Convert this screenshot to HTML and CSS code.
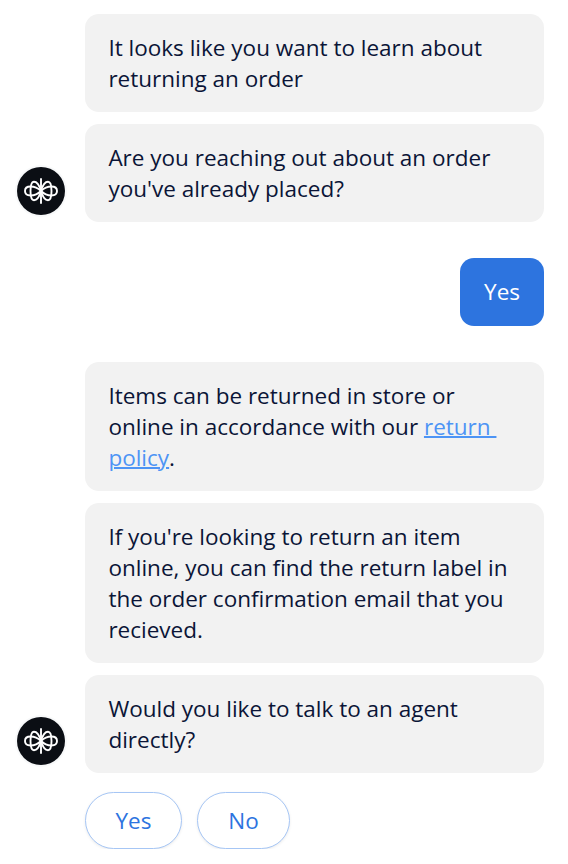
FILE: index.html
```html
<!DOCTYPE html>
<html lang="en">
<head>
<meta charset="UTF-8" />
<meta name="viewport" content="width=device-width, initial-scale=1" />
<title>Chat</title>
<link rel="stylesheet" href="styles.css">
</head>
<body>
  <!-- Shared bot logo -->
  <svg class="sprite" aria-hidden="true">
    <symbol id="logo" viewBox="0 0 48 48">
      <g fill="none" stroke="#fff" stroke-width="1.9" stroke-linecap="round">
        <path d="M24 12v24" />
        <path d="M24 24C20 20 16.500 19.500 13.500 19.500C9.500 19.500 8 21.500 8 24S9.500 28.500 13.500 28.500C16.500 28.500 20 28 24 24" />
        <path d="M24 24C28 20 31.500 19.500 34.500 19.500C38.500 19.500 40 21.500 40 24S38.500 28.500 34.500 28.500C31.500 28.500 28 28 24 24" />
        <path d="M24 24C22 17 19.500 14.800 17 14.800C14.500 14.800 13.500 19 13.500 24S14.500 33.200 17 33.200C19.500 33.200 22 31 24 24" />
        <path d="M24 24C26 17 28.500 14.800 31 14.800C33.500 14.800 34.500 19 34.500 24S33.500 33.200 31 33.200C28.500 33.200 26 31 24 24" />
      </g>
    </symbol>
  </svg>

  <main class="chat" aria-label="Conversation">
    <section class="message-group">
      <div class="avatar"><svg class="logo"><use href="#logo" /></svg></div>
      <div class="messages">
        <p class="bubble">It looks like you want to learn about returning an order</p>
        <p class="bubble">Are you reaching out about an order you've already placed?</p>
      </div>
    </section>

    <section class="message-group user">
      <p class="bubble bubble-user">Yes</p>
    </section>

    <section class="message-group">
      <div class="avatar"><svg class="logo"><use href="#logo" /></svg></div>
      <div class="messages">
        <p class="bubble">Items can be returned in store or online in accordance with our <a href="#">return&nbsp;<br>policy</a>.</p>
        <p class="bubble">If you're looking to return an item online, you can find the return label in the order confirmation email that you recieved.</p>
        <p class="bubble">Would you like to talk to an agent directly?</p>
      </div>
    </section>

    <div class="replies">
      <button type="button" class="reply">Yes</button>
      <button type="button" class="reply">No</button>
    </div>
  </main>
</body>
</html>
```

FILE: styles.css
```css
*, *::before, *::after {
  box-sizing: border-box;
}
body {
  margin: 0;
  font-family: 'Open Sans', sans-serif;
  font-size: 22.5px;
  line-height: 31px;
  background: #fff;
  color: #0b1537;
}
.sprite {
  display: none;
}
.chat {
  padding: 14px 24px 0 17px;
}
.message-group {
  display: flex;
  align-items: flex-end;
  gap: 20px;
  margin-bottom: 36px;
}
.message-group.user {
  justify-content: flex-end;
}
.avatar {
  flex: none;
  width: 48px;
  height: 48px;
  margin-bottom: 7px;
  border-radius: 50%;
  background: #0b0e14;
  box-shadow: 0 0 0 2px #f8f9fa;
}
.message-group:last-of-type .avatar {
  margin-bottom: 8px;
}
.logo {
  display: block;
  width: 48px;
  height: 48px;
}
.messages {
  flex: 1;
  display: flex;
  flex-direction: column;
  gap: 12px;
}
.bubble {
  margin: 0;
  padding: 18px 24px 18px 23.4px;
  border-radius: 14px;
  background: #f2f2f2;
}
.bubble a {
  color: #4d94f5;
  text-decoration: underline;
  text-decoration-thickness: 2px;
}
.bubble-user {
  padding: 18px 24px 19px;
  background: #2d74df;
  color: #fff;
}
.replies {
  display: flex;
  gap: 15px;
  margin: -17px 0 0 68px;
}
.reply {
  width: 97px;
  height: 57px;
  padding: 0;
  border: 1px solid #a6c6f5;
  border-radius: 29px;
  background: #fff;
  box-shadow: 0 1px 3px rgba(0, 0, 0, 0.08);
  color: #2d74df;
  font: inherit;
  cursor: pointer;
}
.reply + .reply {
  width: 93px;
}
```
